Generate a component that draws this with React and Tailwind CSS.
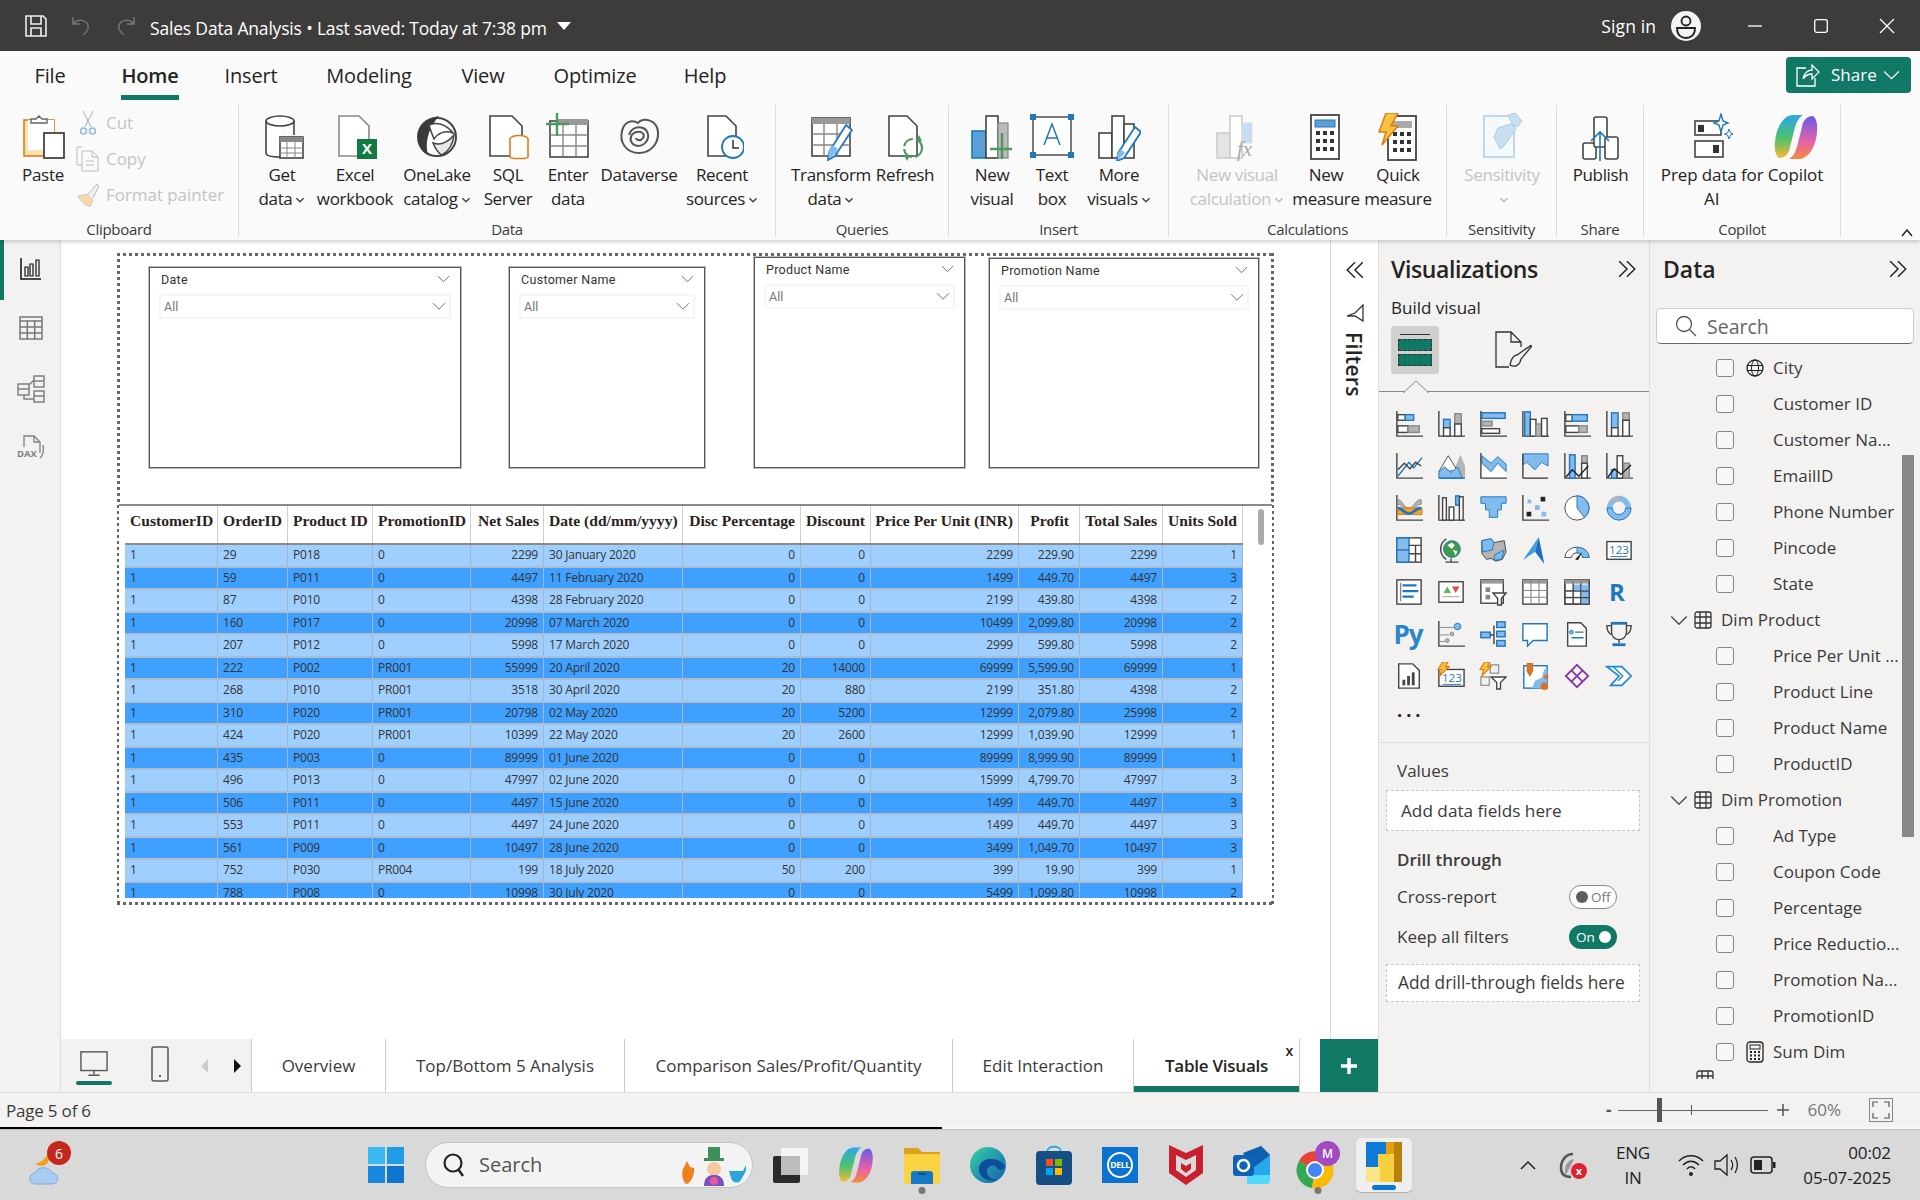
import React from 'react';

const D = '#444', B = '#1f77bd', L = '#82bbee', G = '#b4b4b4', W = '#fff', O = '#e07b10';
const S = ({ w = 28, h = 28, vb, children, className = '' }) => (
  <svg width={w} height={h} viewBox={vb || `0 0 ${w} ${h}`} fill="none" className={'shrink-0 ' + className}>{children}</svg>
);
const R = ({ x, y, w, h, f = 'none', s = D, sw = 1.5, r = 0 }) => <rect x={x} y={y} width={w} height={h} fill={f} stroke={s} strokeWidth={sw} rx={r} />;
const P = ({ d, f = 'none', s = D, sw = 1.5 }) => <path d={d} fill={f} stroke={s} strokeWidth={sw} />;
const Ax = () => <P d="M1 0v27h28" />;
const Bolt = ({ x = 0, y = 0 }) => <path transform={`translate(${x} ${y})`} d="M6 0h6L9 5h4L3 15l2-7H1z" fill="#f6c343" stroke={O} strokeWidth="1.2" />;
const Card123 = () => (<><R x="1" y="5" w="26" h="19" f={W} /><text x="14" y="18" textAnchor="middle" fontSize="12.5" fill={B} fontFamily="Open Sans">123</text><P d="M5 21h18" s={B} sw="1" /></>);
const TableI = ({ x = 1, y = 1, w = 26, h = 26 }) => (<>
  <R x={x} y={y} w={w} h={h} f={W} /><rect x={x} y={y} width={w} height="4" fill="#999" />
  <P d={`M${x + w / 3} ${y}v${h}M${x + 2 * w / 3} ${y}v${h}M${x} ${y + 4 + (h - 4) / 3}h${w}M${x} ${y + 4 + 2 * (h - 4) / 3}h${w}`} s="#888" sw="1.2" />
</>);

const vizIcons = [
  <><Ax /><R x="2" y="4" w="8" h="6" f={W} /><R x="10" y="4" w="9" h="6" f={L} s={B} /><R x="2" y="16" w="11" h="7" f={W} /><R x="13" y="16" w="12" h="7" f={G} s="#888" /></>,
  <><Ax /><R x="6" y="9" w="7" h="9" f={L} s={B} /><R x="6" y="18" w="7" h="9" f={W} /><R x="18" y="3" w="7" h="11" f={G} s="#888" /><R x="18" y="14" w="7" h="13" f={W} /></>,
  <><Ax /><R x="2" y="2" w="25" h="6" f={L} s={B} /><R x="2" y="11" w="11" h="5" f={G} s="#888" /><R x="2" y="19" w="19" h="5" f={W} /></>,
  <><Ax /><R x="3" y="1" w="6" h="26" f={L} s={B} /><R x="9" y="9" w="6" h="18" f={W} /><R x="15" y="14" w="6" h="13" f={G} s="#888" /><R x="21" y="8" w="6" h="19" f={W} /></>,
  <><Ax /><R x="2" y="4" w="7" h="7" f={W} /><R x="9" y="4" w="16" h="7" f={L} s={B} /><R x="2" y="16" w="14" h="7" f={W} /><R x="16" y="16" w="9" h="7" f={G} s="#888" /></>,
  <><Ax /><R x="6" y="2" w="7" h="16" f={L} s={B} /><R x="6" y="18" w="7" h="9" f={W} /><R x="18" y="2" w="7" h="8" f={G} s="#888" /><R x="18" y="10" w="7" h="17" f={W} /></>,
  <><Ax /><P d="M2 25L14 10l5 6 9-11" s={B} /><P d="M2 18l7-7 6 6 6-7 6 4" /></>,
  <><path d="M14 27L24 2l5 12v13z" fill={G} /><path d="M1 20L11 3l10 16z" fill={W} stroke={D} /><path d="M1 27v-7l6-5 7 6 7-6 5 12z" fill={L} stroke={B} /><P d="M1 27h28" s={B} /></>,
  <><path d="M2 11l10 9 7-9 9 9v7H2z" fill={W} /><path d="M2 3l10 8 7-7 9 8v8l-9-9-7 9-10-9z" fill={L} stroke={B} /><Ax /></>,
  <><path d="M1 1h27v13l-7-4-7 8-9-8-4 3z" fill={L} stroke={B} /><path d="M1 27h27" stroke={D} strokeWidth="1.5" /><P d="M1 1v26" /></>,
  <><Ax /><R x="6" y="2" w="6" h="25" f={L} s={B} /><R x="19" y="3" w="6" h="8" f={G} s="#888" /><R x="19" y="11" w="6" h="16" f={W} /><P d="M2 26l7-8 7 7 10-11" s="#222" /></>,
  <><Ax /><R x="6" y="18" w="6" h="9" f={L} s={B} /><R x="12" y="3" w="6" h="24" f={W} /><R x="19" y="11" w="6" h="16" f={G} s="#888" /><P d="M2 26l7-9 7 6 11-10" s="#222" /></>,
  <><Ax /><path d="M2 5c5 0 6 9 12 9s6-9 13-9v5c-7 0-7 9-13 9S8 10 2 10z" fill={G} stroke="#888" /><path d="M2 14h26v7H2z" fill="#f0a030" stroke={O} /><path d="M2 14c5 0 6 6 12 6s6-6 13-6" stroke={B} strokeWidth="3" /></>,
  <><Ax /><R x="5" y="3" w="4" h="24" f={W} /><R x="12" y="13" w="5" h="14" f={W} /><R x="19" y="1" w="4" h="10" f={L} s={B} /><R x="23" y="2" w="4" h="25" f={W} /></>,
  <><path d="M1 2h27v7h-5v7h-4v8h-9v-8H6V9H1z" fill={L} stroke={B} /></>,
  <><Ax /><rect x="6" y="5" width="4" height="4" fill={L} /><rect x="20" y="2" width="5" height="5" fill="#222" /><rect x="14" y="11" width="5" height="5" fill={L} /><rect x="5" y="18" width="5" height="5" fill="#222" /><rect x="21" y="18" width="5" height="5" fill={L} /></>,
  <><circle cx="14" cy="14" r="13" fill={W} stroke={D} /><path d="M14 1a13 13 0 0 1 8 23l-8-10z" fill={L} stroke={B} /></>,
  <><circle cx="14" cy="14" r="10" stroke={L} strokeWidth="6" /><path d="M1 14a13 13 0 0 0 26 0h-6a7 7 0 0 1-14 0z" fill={L} stroke={B} strokeWidth="1" /><path d="M5 5a13 13 0 0 1 9-4v6a7 7 0 0 0-5 2z" fill={G} /></>,
  <><R x="1" y="1" w="26" h="26" f={W} /><rect x="1" y="1" width="13" height="26" fill={L} stroke={B} strokeWidth="1.5" /><P d="M1 14h13" s={B} /><P d="M14 9h13M21 9v18M14 18h13" /></>,
  <><circle cx="15" cy="13" r="9" fill="#3a9c4a" stroke="#2f6fb0" /><path d="M10 9l5-3 3 3-3 4zM16 14l5 1-2 5z" fill={W} /><P d="M9 2a13 13 0 0 0 0 22M8 27h14M14 23v4" /></>,
  <><path d="M2 4l10-2 3 4 11-2 2 12-4 8-7 2-5-3-5 1-5-6z" fill={G} stroke={D} /><path d="M2 4l10-2 3 4-2 8-10 2z" fill={L} stroke={B} /><path d="M15 25l1-6 10-5-3 10z" fill={L} stroke={B} /></>,
  <><path d="M18 0l-4 16L1 25z" fill="#3f9fd8" /><path d="M18 0l6 29-10-13z" fill="#1f6fc0" /></>,
  <><path d="M1 22a13 11 0 0 1 26 0h-7a6 5 0 0 0-12 0z" fill={W} stroke={D} /><path d="M14 11a13 11 0 0 1 13 11h-7a6 5 0 0 0-6-5z" fill={L} stroke={B} /><path d="M12 24l8-8-5 9z" fill="#222" /></>,
  <Card123 />,
  <><R x="1" y="1" w="26" h="26" f={W} /><P d="M5 4v20" s="#888" /><P d="M7 7h15M7 13h17M7 19h12" s={B} sw="2.4" /></>,
  <><R x="1" y="3" w="26" h="22" f={W} /><path d="M6 15l4-7 4 7z" fill="#5cb85c" /><path d="M15 8h8l-4 7z" fill="#e5484d" /><P d="M5 19h18" s="#999" sw="1" /></>,
  <><R x="1" y="1" w="24" h="25" f={W} /><rect x="1" y="1" width="24" height="4" fill="#999" /><rect x="6" y="9" width="5" height="5" fill="#888" /><rect x="6" y="17" width="5" height="5" fill="#888" /><path d="M14 15h14l-5 6v7h-4v-7z" fill={W} stroke={D} strokeWidth="1.5" /></>,
  <TableI />,
  <><TableI /><rect x="10" y="6" width="17" height="7" fill={L} /><rect x="18" y="13" width="9" height="14" fill={L} /><P d="M1 5v22h26V1M10 5v22M18 5v22M1 13h26M1 20h26" s={D} sw="1.2" /></>,
  <span className="text-[24px] font-bold text-[#1f77bd] leading-none font-['Open_Sans'] -translate-x-[2px]">R</span>,
  <span className="text-[26px] font-bold text-[#2a86c8] leading-none font-['Open_Sans'] tracking-[-1px] -translate-x-[1px]">Py</span>,
  <><Ax /><P d="M1 7h17M1 15h11M1 22h7" s="#888" sw="1" /><circle cx="21" cy="6" r="3.5" fill={L} stroke={B} /><circle cx="15" cy="14" r="2" fill={G} stroke="#888" /><circle cx="10" cy="21" r="2" fill={G} stroke="#888" /></>,
  <><rect x="1" y="12" width="10" height="6" fill={L} stroke={B} strokeWidth="1.5" /><P d="M11 15h4M15 5v20" s={D} /><R x="18" y="1" w="9" h="6" f={L} s={B} /><R x="18" y="11" w="9" h="6" f={L} s={B} /><R x="18" y="21" w="9" h="6" f={L} s={B} /></>,
  <P d="M1 3h26v18H12l-6 6v-6H1z" f={W} s={B} />,
  <><P d="M4 2h14l6 6v19H4z" f={W} /><circle cx="8" cy="12" r="2" fill={L} stroke={B} /><P d="M12 12h9M8 18h13" s={B} sw="1.5" /></>,
  <><P d="M6 2h16v10a8 8 0 0 1-16 0zM6 5H1c0 6 2 9 6 10M22 5h5c0 6-2 9-6 10M14 20v4" /><rect x="6" y="1" width="16" height="3" fill={B} /><rect x="7" y="24" width="14" height="3" fill={B} /></>,
  <><P d="M3 1h15l7 7v19H3z" f={W} /><rect x="7" y="18" width="3" height="6" fill={D} /><rect x="12" y="14" width="3" height="10" fill={D} /><rect x="17" y="10" width="3" height="14" fill={D} /></>,
  <><R x="1" y="7" w="27" h="18" f={W} /><text x="15" y="20" textAnchor="middle" fontSize="12.5" fill={B} fontFamily="Open Sans">123</text><P d="M5 23h20" s={B} sw="1" /><Bolt x="-1" y="-1" /></>,
  <><R x="11" y="2" w="9" h="9" s="#999" /><R x="1" y="15" w="9" h="9" s="#999" /><path d="M12 15h16l-6 6v7h-4v-7z" fill={W} stroke={D} strokeWidth="1.5" /><Bolt x="-1" y="-1" /></>,
  <><R x="2" y="3" w="25" h="24" f={W} s={B} /><path d="M11 27l3-8 7-3 3-9 3-1v21z" fill={L} /><path d="M5 0h7v9l-3.500 6L5 9z" fill="#d9732a" /><circle cx="26" cy="15" r="2.500" fill="#d9732a" /><circle cx="24" cy="25" r="4" fill="#d9732a" /></>,
  <><P d="M14 2l12 12-12 12L2 14z" s="#8a3aa6" sw="2" /><P d="M8 8l12 12M20 8L8 20" s="#8a3aa6" sw="2" /></>,
  <><P d="M1 4h16l10 10-10 10H5l9-10z" f={W} s="#1c86d8" sw="1.8" /><P d="M8 4l10 10-5 5" s="#1c86d8" sw="1.4" /></>,
];

const Chev = ({ c = '#444', w = 10 }) => <svg width={w} height={w * 0.6} viewBox="0 0 8 5" className="inline-block ml-[3px] align-middle"><path d="M1 1l3 3 3-3" stroke={c} strokeWidth="1.2" fill="none" /></svg>;
const ChevB = ({ w = 14, c = '#555', className = '' }) => <svg width={w} height={w * 0.6} viewBox="0 0 14 8" className={className}><path d="M1 1l6 6 6-6" stroke={c} strokeWidth="1" fill="none" /></svg>;

const Btn = ({ w, icon, l1, l2, chev, off }) => (
  <div className={`${w} flex flex-col items-center shrink-0`}>
    <div className="h-[48px] mt-[8px] flex items-center justify-center">{icon}</div>
    <div className={`mt-[2px] text-center text-[17px] leading-[24px] whitespace-nowrap tracking-[-0.35px] ${off ? 'text-[#c4c4c4]' : 'text-[#252423]'}`}>
      <div>{l1}</div>
      <div className="h-[24px]">{l2}{chev && <Chev c={off ? '#bbb' : '#444'} />}</div>
    </div>
  </div>
);
const Group = ({ w, label, pl, children }) => (
  <div className={`${w} shrink-0 h-[132px] border-r border-[#dcdcdc] flex flex-col`}>
    <div className={`${pl} flex flex-1 min-h-0`}>{children}</div>
    <div className="text-center text-[15px] leading-[20px] mb-[-2px] tracking-[-0.3px] text-[#3b3a39]">{label}</div>
  </div>
);
const I = ({ children }) => <svg width="44" height="48" viewBox="0 0 44 48" fill="none">{children}</svg>;
const Doc = ({ x = 8, w = 22, h = 42, s = D }) => <path d={`M${x} 3h${w - 10}l10 10v${h - 10}h-${w}z M${x + w - 10} 3v10h10`} stroke={s} strokeWidth="1.6" fill={W} />;

const Icons = {
  paste: <I><rect x="3" y="7" width="30" height="36" fill="#fde2b0" stroke="#d9801a" strokeWidth="1.6" /><rect x="7" y="7" width="26" height="30" fill={W} /><path d="M10 10V6h5l3-3 3 3h5v4z" fill={W} stroke="#666" strokeWidth="1.4" /><rect x="23" y="20" width="20" height="25" fill={W} stroke={D} strokeWidth="1.8" /></I>,
  getData: <I><path d="M6 8v32c0 3 6 5 15 5V8" fill={W} /><ellipse cx="20" cy="8" rx="14" ry="5" fill={W} stroke={D} strokeWidth="1.6" /><path d="M6 8v32c0 3 6 4 14 4M34 8v14" stroke={D} strokeWidth="1.6" /><rect x="20" y="24" width="23" height="21" fill={W} stroke={D} strokeWidth="1.6" /><rect x="20" y="24" width="23" height="5" fill="#888" /><path d="M27 29v16M35 29v16M20 35h23M20 40h23" stroke="#888" /></I>,
  excel: <I><Doc x="6" w="30" h="40" s="#888" /><rect x="24" y="26" width="20" height="20" fill="#107c41" /><text x="34" y="41" fontSize="15" fontWeight="700" textAnchor="middle" fill={W} fontFamily="Open Sans">X</text></I>,
  onelake: <I><circle cx="22" cy="24" r="19" fill={W} stroke="#444" strokeWidth="2" /><path d="M24 3C13 5 3 12 3 25c0 8 4 14 10 17-3-11-1-25 11-39z" fill="#3a3a3a" /><path d="M14 12c8-4 18 0 24 8-8-3-15 0-19 6-2-5-4-10-5-14z" fill="#fff" stroke="#444" strokeWidth="1.500" /><path d="M18 30c8 3 15-1 21-8-1 9-5 16-12 20-4-2-7-7-9-12z" fill="#e8e8e8" stroke="#444" strokeWidth="1.500" /></I>,
  sql: <I><Doc x="4" w="32" h="40" /><ellipse cx="33" cy="26" rx="9" ry="3.500" fill={W} stroke={O} strokeWidth="1.6" /><path d="M24 26v18c0 2 18 2 18 0V26" fill={W} stroke={O} strokeWidth="1.6" /></I>,
  enter: <I><rect x="4" y="8" width="38" height="36" fill={W} stroke={D} strokeWidth="1.6" /><rect x="10" y="6" width="32" height="6" fill="#999" /><path d="M17 12v32M30 12v32M4 22h38M4 33h38" stroke="#888" strokeWidth="1.4" /><path d="M11 0v23M0 11h23" stroke="#4a9a5e" strokeWidth="2.4" /></I>,
  dataverse: <I><path d="M5 18c2-9 10-12 16-8 4-6 19-4 20 9 1 13-9 21-19 21C10 40 2 30 5 18z" stroke="#555" strokeWidth="2" /><path d="M12 22c2-7 9-9 14-7s7 9 3 14-11 5-14 1-1-10 5-11 8 3 6 6-6 3-7 0" stroke="#555" strokeWidth="2" /></I>,
  recent: <I><Doc x="8" w="28" h="40" /><circle cx="33" cy="34" r="11" fill={W} stroke={B} strokeWidth="1.8" /><path d="M33 27v8h6" stroke="#333" strokeWidth="1.5" /></I>,
  transform: <I><rect x="3" y="5" width="38" height="38" fill={W} stroke={D} strokeWidth="1.6" /><rect x="3" y="5" width="38" height="6" fill="#999" /><path d="M15 11v32M28 11v32M3 21h38M3 32h38" stroke="#888" strokeWidth="1.4" /><path d="M37 12l6 5-17 26-7 4 1-8z" fill={W} stroke={B} strokeWidth="1.8" /><path d="M24 32l6 5-10 9-1-7z" fill={L} /></I>,
  refresh: <I><Doc x="6" w="28" h="40" /><circle cx="30" cy="35" r="9" stroke="#4a9a5e" strokeWidth="2.2" strokeDasharray="12 3" /><path d="M36 22l3 6-6 0zM24 48l-3-6h6z" fill="#4a9a5e" /></I>,
  newVisual: <I><rect x="2" y="18" width="14" height="27" fill="#5a9fd8" stroke={B} strokeWidth="1.6" /><rect x="16" y="3" width="12" height="42" fill={W} stroke={D} strokeWidth="1.6" /><rect x="28" y="10" width="10" height="35" fill="#bbb" stroke="#888" strokeWidth="1.2" /><path d="M32 20v26M20 36h22" stroke="#4a9a5e" strokeWidth="2.4" /></I>,
  textBox: <I><rect x="3" y="4" width="38" height="38" fill={W} stroke={D} strokeWidth="1.4" /><rect x="0" y="1" width="6" height="6" fill={B} /><rect x="38" y="1" width="6" height="6" fill={B} /><rect x="0" y="39" width="6" height="6" fill={B} /><rect x="38" y="39" width="6" height="6" fill={B} /><path d="M14 32l8-21 8 21M17 25h10" stroke={B} strokeWidth="1.5" fill="none" /></I>,
  more: <I><rect x="2" y="20" width="13" height="25" fill={W} stroke={D} strokeWidth="1.6" /><rect x="15" y="3" width="12" height="42" fill={W} stroke={D} strokeWidth="1.6" /><rect x="27" y="11" width="10" height="34" fill={W} stroke={D} strokeWidth="1.6" /><path d="M38 14l6 5-17 26-7 3 1-8z" fill={W} stroke={B} strokeWidth="1.8" /><path d="M24 36l4 4-7 7-1-6z" fill={L} /></I>,
  calc: <I><rect x="2" y="20" width="13" height="25" fill="#e4e4e4" stroke="#ccc" strokeWidth="1.6" /><rect x="15" y="3" width="12" height="42" fill={W} stroke="#ccc" strokeWidth="1.6" /><rect x="27" y="10" width="10" height="20" fill="#c5dcf2" stroke="#ddd" /><text x="22" y="43" fontFamily="Liberation Serif" fontStyle="italic" fontSize="21" fill="#aaa">fx</text></I>,
  measure: <I><rect x="7" y="2" width="28" height="44" fill={W} stroke={D} strokeWidth="1.8" /><rect x="11" y="7" width="20" height="7" fill="#5a9fd8" stroke={B} /><path d="M12 20h4M19 20h4M26 20h4M12 28h4M19 28h4M26 28h4M12 36h4M19 36h4M26 36h4" stroke="#333" strokeWidth="4" /></I>,
  quick: <I><rect x="12" y="3" width="28" height="44" fill={W} stroke={D} strokeWidth="1.8" /><rect x="16" y="8" width="20" height="7" fill="#aaa" /><path d="M17 21h4M24 21h4M31 21h4M17 29h4M24 29h4M31 29h4M17 37h4M24 37h4M31 37h4" stroke="#333" strokeWidth="4" /><path d="M10 0h12l-7 13h7L6 32l4-13H3z" fill="#f6c343" stroke={O} strokeWidth="1.5" /></I>,
  sens: <I><rect x="4" y="3" width="30" height="41" fill="#f4f9fd" stroke="#b8d6ee" strokeWidth="1.8" /><path d="M28 2l7-2 7 8-5 6-5-3zM18 15l13-4 5 5-12 17-4 3-6-12z" fill="#c9e0f3" stroke="#a8cbe8" /></I>,
  publish: <I><rect x="4" y="30" width="13" height="16" rx="2" fill={W} stroke={D} strokeWidth="1.6" /><rect x="15" y="4" width="13" height="30" rx="2" fill={W} stroke={D} strokeWidth="1.6" /><rect x="26" y="24" width="13" height="22" rx="2" fill={W} stroke={D} strokeWidth="1.6" /><path d="M21 48V19M12 28l9-9 9 9" stroke={B} strokeWidth="1.6" fill="none" /></I>,
  prep: <I><rect x="6" y="8" width="26" height="14" fill={W} stroke={D} strokeWidth="1.6" /><rect x="9" y="12" width="6" height="7" fill="#333" /><rect x="6" y="28" width="28" height="16" fill={W} stroke={D} strokeWidth="1.6" /><rect x="24" y="32" width="6" height="8" fill="#333" /><path d="M32 1l2 7 5 2-5 2-2 7-2-7-5-2 5-2z" fill={W} stroke={B} strokeWidth="1.4" /><path d="M40 16l1.500 4 3 1-3 1-1.500 4-1.500-4-3-1 3-1z" fill={W} stroke={B} /></I>,
};
const Copilot = ({ id, w = 44, h = 48 }) => (
  <svg width={w} height={h} viewBox="0 0 44 48" fill="none">
    <defs>
      <linearGradient id={id + 'a'} x1="0" y1="0" x2="0" y2="1"><stop offset="0" stopColor="#2aa7e8" /><stop offset=".55" stopColor="#4fc26b" /><stop offset="1" stopColor="#f7b733" /></linearGradient>
      <linearGradient id={id + 'b'} x1="0" y1="0" x2="0" y2="1"><stop offset="0" stopColor="#6a5be8" /><stop offset=".6" stopColor="#e661a8" /><stop offset="1" stopColor="#f78a3c" /></linearGradient>
    </defs>
    <path d="M18 2h11c-5 3-7 8-9 16l-4 16c-1 7-5 11-11 11 -3-2-5-8-4-16C2 15 9 3 18 2z" fill={`url(#${id}a)`} />
    <path d="M26 46H15c5-3 7-8 9-16l4-16c1-7 5-11 11-11 3 2 5 8 4 16-1 14-8 26-17 27z" fill={`url(#${id}b)`} />
  </svg>
);

const Small = ({ icon, label }) => (
  <div className="h-[36px] flex items-center"><div className="w-[28px] flex justify-center">{icon}</div><span className="ml-[4px] text-[17px] text-[#c4c4c4] tracking-[-0.05px] whitespace-nowrap">{label}</span></div>
);

function TitleBar() {
  return (
    <div className="h-[51px] bg-[#3d3c3a] flex items-center text-white shrink-0">
      <div className="w-[150px] flex items-center shrink-0">
        <svg width="24" height="24" viewBox="0 0 24 24" fill="none" className="ml-[24px]"><path d="M2 2h17l3 3v17H2zM7 2v8h10V2M7 22v-8h10v8" stroke="#eee" strokeWidth="1.600" /></svg>
        <svg width="22" height="22" viewBox="0 0 22 22" fill="none" className="ml-[23px]"><path d="M2 2v7h7M2 9c4-5 13-5 15 1 1 4-2 8-5 10" stroke="#777" strokeWidth="1.500" /></svg>
        <svg width="22" height="22" viewBox="0 0 22 22" fill="none" className="ml-[21px]"><path d="M20 2v7h-7M20 9c-4-5-13-5-15 1-1 4 2 8 5 10" stroke="#777" strokeWidth="1.500" /></svg>
      </div>
      <span className="text-[17.5px] tracking-[-0.18px] whitespace-nowrap mt-[6px]">Sales Data Analysis • Last saved: Today at 7:38 pm</span>
      <svg width="14" height="8" viewBox="0 0 14 8" className="ml-[10px]"><path d="M0 0h14L7 8z" fill="#fff" /></svg>
      <div className="ml-auto flex items-center">
        <span className="text-[17.5px] tracking-[0.1px] mt-[1px]">Sign in</span>
        <svg width="30" height="30" viewBox="0 0 30 30" className="ml-[15px]"><circle cx="15" cy="15" r="15" fill="#f4f4f4" /><circle cx="15" cy="10" r="4.500" fill="none" stroke="#222" strokeWidth="1.800" /><path d="M6 17h18c0 7-4 10-9 10s-9-3-9-10z" fill="none" stroke="#222" strokeWidth="1.800" /></svg>
        <svg width="14" height="14" viewBox="0 0 14 14" className="ml-[47px]"><path d="M0 7h14" stroke="#fff" strokeWidth="1.300" /></svg>
        <svg width="14" height="14" viewBox="0 0 14 14" className="ml-[52px]"><rect x=".700" y=".700" width="12.600" height="12.600" rx="2" fill="none" stroke="#fff" strokeWidth="1.300" /></svg>
        <svg width="16" height="16" viewBox="0 0 16 16" className="ml-[51px] mr-[25px]"><path d="M1 1l14 14M15 1L1 15" stroke="#fff" strokeWidth="1.300" /></svg>
      </div>
    </div>
  );
}

function Ribbon() {
  const tabs = [['File', 'w-[100px]'], ['Home', 'w-[100px]'], ['Insert', 'w-[102px]'], ['Modeling', 'w-[134px]'], ['View', 'w-[94px]'], ['Optimize', 'w-[130px]'], ['Help', 'w-[90px]']];
  return (
    <div className="h-[189px] bg-[#fafafa] shrink-0 relative z-10 shadow-[0_2px_4px_rgba(0,0,0,0.18)]">
      <div className="h-[54px] flex items-start relative">
        {tabs.map(([t, w]) => (
          <div key={t} className={`${w} h-[47px] flex items-center justify-center relative text-[20px] tracking-[-0.15px] text-[#252423] ${t === 'Home' ? 'font-semibold' : ''}`}>
            <span className="relative mt-[3px]">{t}{t === 'Home' && <span className="absolute left-0 right-0 -bottom-[9px] h-[5px] bg-[#117865]" />}</span>
          </div>
        ))}
        <div className="absolute left-[1786px] top-[6px] w-[125px] h-[36px] rounded-[4px] bg-[#117865] flex items-center text-white">
          <svg width="26" height="26" viewBox="0 0 26 26" fill="none" className="ml-[8px]"><path d="M12 6H3v18h18v-8M9 17c1-6 5-9 9-9V3l7 7-7 7v-5c-4 0-7 2-9 5z" stroke="#fff" strokeWidth="1.300" /></svg>
          <span className="ml-[11px] text-[17px] tracking-[0px]">Share</span>
          <ChevB w={17} c="#fff" className="ml-[6px]" />
        </div>
      </div>
      <div className="flex h-[135px] items-start">
        <div className="w-[239px] shrink-0 h-[132px] border-r border-[#dcdcdc] flex flex-col">
          <div className="flex flex-1 min-h-0 pl-[20px]">
            <div className="w-[46px] flex flex-col items-center">
              <div className="h-[48px] mt-[8px] flex items-center">{Icons.paste}</div>
              <div className="mt-[2px] text-[17px] leading-[24px] tracking-[-0.3px] text-[#252423]">Paste</div>
            </div>
            <div className="ml-[8px] flex flex-col">
              <Small label="Cut" icon={<svg width="18" height="26" viewBox="0 0 18 26" fill="none"><path d="M4 1l8 16M14 1L6 17" stroke="#aaa" /><circle cx="4.500" cy="21" r="3" stroke="#8fbbdc" strokeWidth="1.500" /><circle cx="13.500" cy="21" r="3" stroke="#8fbbdc" strokeWidth="1.500" /></svg>} />
              <Small label="Copy" icon={<svg width="24" height="26" viewBox="0 0 24 26" fill="none"><path d="M6 1H1v18h5" stroke="#bbb" /><path d="M6 5h10l6 6v14H6zM16 5v6h6M10 15h8M10 19h8" stroke="#bbb" /></svg>} />
              <Small label="Format painter" icon={<svg width="24" height="24" viewBox="0 0 24 24" fill="none"><path d="M2 13l9-2 6 6-3 7c-4-1-10-6-12-11z" fill="#f8d9ac" stroke="#ccc" /><path d="M12 11l9-10 2 2-6 12" fill="#eee" stroke="#bbb" /></svg>} />
            </div>
          </div>
          <div className="text-center text-[15px] leading-[20px] mb-[-2px] tracking-[-0.3px] text-[#3b3a39]">Clipboard</div>
        </div>
        <Group w="w-[537px]" label="Data" pl="pl-[13px]">
          <Btn w="w-[60px]" icon={Icons.getData} l1="Get" l2="data" chev />
          <Btn w="w-[86px]" icon={Icons.excel} l1="Excel" l2="workbook" />
          <Btn w="w-[78px]" icon={Icons.onelake} l1="OneLake" l2="catalog" chev />
          <Btn w="w-[64px]" icon={Icons.sql} l1="SQL" l2="Server" />
          <Btn w="w-[56px]" icon={Icons.enter} l1="Enter" l2="data" />
          <Btn w="w-[86px]" icon={Icons.dataverse} l1="Dataverse" l2="" />
          <Btn w="w-[80px]" icon={Icons.recent} l1="Recent" l2="sources" chev />
        </Group>
        <Group w="w-[173px]" label="Queries" pl="pl-[9px]">
          <Btn w="w-[92px]" icon={Icons.transform} l1="Transform" l2="data" chev />
          <Btn w="w-[56px]" icon={Icons.refresh} l1="Refresh" l2="" />
        </Group>
        <Group w="w-[220px]" label="Insert" pl="pl-[13px]">
          <Btn w="w-[60px]" icon={Icons.newVisual} l1="New" l2="visual" />
          <Btn w="w-[60px]" icon={Icons.textBox} l1="Text" l2="box" />
          <Btn w="w-[74px]" icon={Icons.more} l1="More" l2="visuals" chev />
        </Group>
        <Group w="w-[278px]" label="Calculations" pl="pl-[15px]">
          <Btn w="w-[106px]" icon={Icons.calc} l1="New visual" l2="calculation" chev off />
          <Btn w="w-[72px]" icon={Icons.measure} l1="New" l2="measure" />
          <Btn w="w-[72px]" icon={Icons.quick} l1="Quick" l2="measure" />
        </Group>
        <Group w="w-[110px]" label="Sensitivity" pl="">
          <Btn w="w-[110px]" icon={Icons.sens} l1="Sensitivity" l2="" chev off />
        </Group>
        <Group w="w-[87px]" label="Share" pl="">
          <Btn w="w-[87px]" icon={Icons.publish} l1="Publish" l2="" />
        </Group>
        <Group w="w-[197px]" label="Copilot" pl="">
          <div className="w-[197px] flex flex-col">
            <div className="h-[48px] mt-[8px] flex items-center pl-[45px] gap-[41px]">{Icons.prep}<Copilot id="c1" /></div>
            <div className="mt-[2px] text-[17px] leading-[24px] tracking-[-0.12px] text-[#252423] text-center whitespace-nowrap">Prep data for Copilot</div>
            <div className="text-[17px] leading-[24px] text-[#252423] pl-[60px]">AI</div>
          </div>
        </Group>
        <div className="ml-auto mr-[7px] mt-[124px]"><svg width="12" height="8" viewBox="0 0 12 8"><path d="M1 7l5-6 5 6" stroke="#222" strokeWidth="1.500" fill="none" /></svg></div>
      </div>
    </div>
  );
}

function LeftNav() {
  return (
    <div className="w-[61px] shrink-0 bg-[#f3f2f1] border-r border-[#dedede] flex flex-col items-center relative pl-[2px]">
      <div className="absolute left-0 top-0 w-[4px] h-[60px] bg-[#117865]" />
      <svg width="22" height="22" viewBox="0 0 22 22" fill="none" className="mt-[18px]"><path d="M1 0v21h20" stroke="#111" strokeWidth="1.500" /><path d="M5 9h3v9H5zM10 6h3v12h-3zM16 2h3v16h-3z" stroke="#111" strokeWidth="1.200" /></svg>
      <svg width="24" height="24" viewBox="0 0 24 24" fill="none" className="mt-[36px]"><rect x="1" y="1" width="22" height="22" stroke="#777" strokeWidth="1.500" /><path d="M1 5h22M1 11h22M1 17h22M8.300 5v18M15.700 5v18" stroke="#777" strokeWidth="1.500" /></svg>
      <svg width="28" height="28" viewBox="0 0 28 28" fill="none" className="mt-[35px]"><path d="M1 9h11v11H1zM1 14h11M17 1h10v11H17zM17 6h10M17 16h10v11H17zM17 21h10M12 10l5-5M7 20v4h10" stroke="#808080" strokeWidth="1.500" /></svg>
      <div className="mt-[32px] relative w-[28px] h-[26px]">
        <svg width="28" height="26" viewBox="0 0 28 26" fill="none"><path d="M7 12V1h10l6 6v11M17 1v6h6M26 10c1 6 0 10-3 13" stroke="#808080" strokeWidth="1.300" /></svg>
        <span className="absolute left-[0px] top-[13px] text-[9.500px] leading-[12px] font-bold text-[#808080]">DAX</span>
      </div>
    </div>
  );
}

function Slicer({ box, title }) {
  return (
    <div className={`${box} absolute border border-[#555] shadow-[0_0_0_1px_#bbb] bg-white px-[9px] flex flex-col`}>
      <div className="h-[24px] flex items-center justify-between pl-[2px] pr-[1px] text-[12.500px] text-[#333] font-['Roboto'] tracking-[0.3px] shrink-0">
        <span className="mt-[1px]">{title}</span><ChevB w={13} c="#666" className="mb-[3px]" />
      </div>
      <div className="h-[25px] mt-[2px] border-2 border-[#f6f6f6] flex items-center justify-between pl-[3px] pr-[3px] text-[12.500px] text-[#777] font-['Roboto']">
        <span className="mt-[1px]">All</span><ChevB w={14} c="#777" />
      </div>
    </div>
  );
}

const rows = [
  '1,29,P018,0,2299,30 January 2020,0,0,2299,229.90,2299,1',
  '1,59,P011,0,4497,11 February 2020,0,0,1499,449.70,4497,3',
  '1,87,P010,0,4398,28 February 2020,0,0,2199,439.80,4398,2',
  '1,160,P017,0,20998,07 March 2020,0,0,10499,2|099.80,20998,2',
  '1,207,P012,0,5998,17 March 2020,0,0,2999,599.80,5998,2',
  '1,222,P002,PR001,55999,20 April 2020,20,14000,69999,5|599.90,69999,1',
  '1,268,P010,PR001,3518,30 April 2020,20,880,2199,351.80,4398,2',
  '1,310,P020,PR001,20798,02 May 2020,20,5200,12999,2|079.80,25998,2',
  '1,424,P020,PR001,10399,22 May 2020,20,2600,12999,1|039.90,12999,1',
  '1,435,P003,0,89999,01 June 2020,0,0,89999,8|999.90,89999,1',
  '1,496,P013,0,47997,02 June 2020,0,0,15999,4|799.70,47997,3',
  '1,506,P011,0,4497,15 June 2020,0,0,1499,449.70,4497,3',
  '1,553,P011,0,4497,24 June 2020,0,0,1499,449.70,4497,3',
  '1,561,P009,0,10497,28 June 2020,0,0,3499,1|049.70,10497,3',
  '1,752,P030,PR004,199,18 July 2020,50,200,399,19.90,399,1',
  '1,788,P008,0,10998,30 July 2020,0,0,5499,1|099.80,10998,2',
].map(r => r.split(',').map(c => c.replace('|', ',')));
const headers = ['CustomerID', 'OrderID', 'Product ID', 'PromotionID', 'Net Sales', 'Date (dd/mm/yyyy)', 'Disc Percentage', 'Discount', 'Price Per Unit (INR)', 'Profit', 'Total Sales', 'Units Sold'];
const cols = 'grid grid-cols-[93px_70px_85px_98px_73px_139px_118px_70px_148px_61px_83px_80px]';
const Dots = ({ c }) => <div className={`absolute ${c}`} />;

function Canvas() {
  return (
    <div className="flex-1 relative bg-white overflow-hidden">
      <div className="absolute left-[56px] top-[13px] w-[1157px] h-[652px]">
        <Dots c="left-0 right-0 top-0 h-[3px] bg-[repeating-linear-gradient(90deg,#666_0_3px,transparent_3px_6px)]" />
        <Dots c="left-0 right-0 bottom-0 h-[3px] bg-[repeating-linear-gradient(90deg,#666_0_3px,transparent_3px_6px)]" />
        <Dots c="left-0 top-0 bottom-0 w-[3px] bg-[repeating-linear-gradient(180deg,#666_0_3px,transparent_3px_6px)]" />
        <Dots c="right-0 top-0 bottom-0 w-[3px] bg-[repeating-linear-gradient(180deg,#666_0_3px,transparent_3px_6px)]" />
      </div>
      <Slicer box="left-[88px] top-[27px] w-[312px] h-[201px]" title="Date" />
      <Slicer box="left-[448px] top-[27px] w-[196px] h-[201px]" title="Customer Name" />
      <Slicer box="left-[693px] top-[17px] w-[211px] h-[211px]" title="Product Name" />
      <Slicer box="left-[928px] top-[18px] w-[270px] h-[210px]" title="Promotion Name" />
      <div className="absolute left-[58px] top-[264px] w-[1153px] h-[394px] border-t-2 border-[#8a8a8a] overflow-hidden bg-white">
        <div className="absolute right-[8px] top-[3px] w-[6px] h-[36px] rounded-[3px] bg-[#aaa]" />
        <div className="pl-[6px]">
          <div className={`${cols} h-[39px] w-[1118px] border-b-2 border-[#8a8a8a]`}>
            {headers.map((h, i) => (
              <div key={h} className={`pb-[8px] border-r border-[#d0d0d0] flex items-center whitespace-nowrap text-[15.600px] font-bold text-[#2b2220] font-['Liberation_Serif',serif] ${i === 9 ? 'justify-end pr-[10px]' : i >= 6 && i < 11 ? 'justify-end pr-[5px]' : i === 4 ? 'pl-[7px]' : 'pl-[5px]'}`}>{h}</div>
            ))}
          </div>
          {rows.map((r, ri) => (
            <div key={ri} className={`${cols} w-[1118px] h-[22.500px] border-b-2 border-[#aebccc] ${ri % 2 ? 'bg-[#3fa0ff]' : 'bg-[#9fcfff]'}`}>
              {r.map((c, i) => (
                <div key={i} className={`border-r border-[#a8b4c2] flex items-center text-[12px] tracking-[-0.2px] text-[#333] whitespace-nowrap px-[5px] ${i === 4 || i > 5 ? 'justify-end' : ''}`}>{c}</div>
              ))}
            </div>
          ))}
        </div>
      </div>
    </div>
  );
}

function Filters() {
  return (
    <div className="w-[48px] shrink-0 bg-white border-l border-[#d8d8d8] flex flex-col items-center">
      <svg width="20" height="18" viewBox="0 0 18 16" fill="none" className="mt-[21px]"><path d="M9 1L2 8l7 7M16 1L9 8l7 7" stroke="#222" strokeWidth="1.300" /></svg>
      <svg width="18" height="18" viewBox="0 0 18 18" fill="none" className="mt-[25px]"><path d="M17 1v16L9 12H1l8-3z" stroke="#333" strokeWidth="1.300" /></svg>
      <div className="mt-[10px] [writing-mode:vertical-rl] text-[21px] font-semibold text-[#252423] tracking-[0.3px] -ml-[2px]">Filters</div>
    </div>
  );
}

function Tabs() {
  const t = [['Overview', 'w-[134px]'], ['Top/Bottom 5 Analysis', 'w-[239px]'], ['Comparison Sales/Profit/Quantity', 'w-[328px]'], ['Edit Interaction', 'w-[181px]']];
  return (
    <div className="h-[53px] shrink-0 flex bg-white">
      <div className="w-[191px] bg-[#f3f2f1] flex items-center pl-[15px] relative border-r border-[#ccc]">
        <div className="relative w-[36px] h-[53px] flex justify-center">
          <svg width="28" height="30" viewBox="0 0 30 30" fill="none" className="mt-[10px]"><rect x="1" y="2" width="28" height="20" stroke="#555" strokeWidth="1.500" /><path d="M15 22v4M9 27h12" stroke="#555" strokeWidth="1.500" /></svg>
          <div className="absolute left-0 right-0 top-[42px] h-[4px] rounded-full bg-[#117865]" />
        </div>
        <svg width="18" height="36" viewBox="0 0 18 36" fill="none" className="ml-[39px] mb-[4px]"><rect x="1" y="1" width="16" height="34" rx="2" stroke="#555" strokeWidth="1.500" /><path d="M8 30h2" stroke="#333" strokeWidth="1.500" /></svg>
        <svg width="8" height="14" viewBox="0 0 8 14" className="ml-[32px]"><path d="M7 0v14L0 7z" fill="#ccc" /></svg>
        <svg width="8" height="14" viewBox="0 0 8 14" className="ml-[24px]"><path d="M1 0v14l7-7z" fill="#111" /></svg>
      </div>
      {t.map(([n, w]) => <div key={n} className={`${w} border-r border-[#ccc] flex items-center justify-center text-[17px] tracking-[0px] text-[#3b3a39] whitespace-nowrap`}>{n}</div>)}
      <div className="w-[166px] relative border-r border-[#ccc] flex items-center justify-center text-[17px] font-semibold tracking-[-0.25px] text-[#252423] whitespace-nowrap">
        Table Visuals
        <span className="absolute right-[6px] top-[3px] text-[14px] leading-[18px] text-[#222]">x</span>
        <div className="absolute left-0 right-0 bottom-0 h-[6px] bg-[#117865]" />
      </div>
      <div className="w-[20px]" />
      <div className="w-[58px] bg-[#117865] flex items-center justify-center"><svg width="18" height="18" viewBox="0 0 18 18"><path d="M9 1v16M1 9h16" stroke="#fff" strokeWidth="3.500" /></svg></div>
    </div>
  );
}

const Toggle = ({ on }) => on ? (
  <div className="w-[48px] h-[24px] rounded-full bg-[#117865] flex items-center justify-between pl-[7px] pr-[6px] text-[13.500px] text-white"><span>On</span><span className="w-[12px] h-[12px] rounded-full bg-white" /></div>
) : (
  <div className="w-[48px] h-[24px] rounded-full bg-white border border-[#8a8886] flex items-center pl-[6px] text-[13.500px] text-[#777]"><span className="w-[12px] h-[12px] rounded-full bg-[#605e5c] mr-[3px]" /><span>Off</span></div>
);

function Viz() {
  return (
    <div className="w-[271px] shrink-0 bg-[#f3f2f1] border-l border-[#dedede] flex flex-col">
      <div className="h-[58px] pl-[12px] pr-[12px] flex items-center justify-between shrink-0">
        <span className="text-[23px] font-semibold tracking-[-0.4px] text-[#252423]">Visualizations</span>
        <svg width="20" height="18" viewBox="0 0 18 16" fill="none"><path d="M2 1l7 7-7 7M9 1l7 7-7 7" stroke="#222" strokeWidth="1.300" /></svg>
      </div>
      <div className="pl-[12px] text-[17px] font-medium leading-[24px] text-[#252423] -mt-[2px]">Build visual</div>
      <div className="pl-[12px] mt-[6px] flex items-center relative h-[48px]">
        <div className="w-[48px] h-[48px] rounded-[3px] bg-[#d2d0ce] flex flex-col items-center justify-center">
          <div className="w-[30px] h-[1px] bg-[#333] mb-[4px]" />
          <div className="w-[34px] h-[12px] bg-[#117865] border border-dashed border-[#333] mb-[3px]" />
          <div className="w-[34px] h-[12px] bg-[#117865] border border-dashed border-[#333]" />
        </div>
        <svg width="38" height="38" viewBox="0 0 38 38" fill="none" className="ml-[56px]"><path d="M14 36H1V1h15l10 10v5M16 1v10h10" stroke="#333" strokeWidth="1.300" /><path d="M15 34c5 3 10 0 11-6l10-12c1-1 0-2-1-1L22 24c-4 0-6 5-7 10z" fill="#f3f2f1" stroke="#333" strokeWidth="1.300" /></svg>
      </div>
      <div className="relative h-[18px] border-b border-[#8a8886] shrink-0">
        <svg width="26" height="13" viewBox="0 0 26 13" className="absolute left-[24px] top-[6px]"><path d="M0 13L13 1l13 12" fill="#f3f2f1" stroke="#8a8886" /></svg>
      </div>
      <div className="grid grid-cols-[repeat(6,42px)] auto-rows-[42px] pl-[9px] pt-[11px] shrink-0">
        {vizIcons.map((ic, i) => (
          <div key={i} className="flex items-center justify-center">
            {ic.type === 'span' ? ic : <S vb="-1 -1 30 30">{ic}</S>}
          </div>
        ))}
      </div>
      <div className="pl-[18px] mt-[4px] text-[18px] leading-[18px] tracking-[4px] font-bold text-[#222]">...</div>
      <div className="mt-[23px] border-t border-[#e1dfdd] pt-[17px] flex flex-col">
        <div className="pl-[18px] text-[17px] leading-[22px] text-[#3b3a39]">Values</div>
        <div className="ml-[7px] w-[254px] h-[41px] mt-[8px] bg-white border border-dashed border-[#c8c6c4] flex items-center pl-[14px] text-[17.200px] text-[#3b3a39]">Add data fields here</div>
        <div className="pl-[18px] mt-[17px] text-[17px] font-semibold leading-[24px] text-[#3b3a39]">Drill through</div>
        <div className="pl-[18px] pr-[32px] mt-[13px] h-[24px] flex items-center justify-between text-[17px] text-[#3b3a39]"><span>Cross-report</span><Toggle /></div>
        <div className="pl-[18px] pr-[32px] mt-[16px] h-[24px] flex items-center justify-between text-[17px] text-[#3b3a39]"><span>Keep all filters</span><Toggle on /></div>
        <div className="ml-[7px] w-[254px] h-[38px] mt-[15px] bg-white border border-dashed border-[#c8c6c4] flex items-center pl-[11px] text-[17.300px] text-[#3b3a39] whitespace-nowrap overflow-hidden">Add drill-through fields here</div>
      </div>
    </div>
  );
}

const TblI = () => <svg width="18" height="18" viewBox="0 0 18 18" fill="none"><rect x="1" y="1" width="16" height="16" rx="2" stroke="#333" strokeWidth="1.300" /><path d="M1 6h16M1 12h16M6 1v16M12 1v16" stroke="#333" strokeWidth="1.300" /></svg>;
const Globe = () => <svg width="18" height="18" viewBox="0 0 18 18" fill="none"><circle cx="9" cy="9" r="8" stroke="#222" strokeWidth="1.300" /><ellipse cx="9" cy="9" rx="3.500" ry="8" stroke="#222" /><path d="M1 6.500h16M1 11.500h16" stroke="#222" /></svg>;
const Calc = () => <svg width="18" height="22" viewBox="0 0 18 22" fill="none"><rect x="1" y="1" width="16" height="20" rx="3" stroke="#222" strokeWidth="1.300" /><rect x="4" y="4" width="10" height="4" stroke="#222" /><path d="M4 11h2M8 11h2M12 11h2M4 14.500h2M8 14.500h2M12 14.500h2M4 18h2M8 18h2M12 18h2" stroke="#222" strokeWidth="1.800" /></svg>;
const Field = ({ children, icon }) => (
  <div className="h-[36px] flex items-center pl-[66px] shrink-0">
    <div className="w-[18px] h-[18px] border border-[#8a8886] rounded-[3px] bg-[#f8f8f8]" />
    <div className="w-[39px] flex justify-center pl-[2px]">{icon}</div>
    <span className="text-[17px] text-[#3b3a39] whitespace-nowrap">{children}</span>
  </div>
);
const Tbl = ({ children }) => (
  <div className="h-[36px] flex items-center pl-[20px] shrink-0">
    <ChevB w={18} c="#444" />
    <span className="ml-[6px]"><TblI /></span>
    <span className="ml-[9px] text-[17px] text-[#3b3a39] whitespace-nowrap">{children}</span>
  </div>
);

function Data() {
  return (
    <div className="flex-1 bg-[#f3f2f1] border-l border-[#dedede] flex flex-col min-w-0 relative">
      <div className="h-[58px] pl-[13px] pr-[12px] mb-[2px] flex items-center justify-between shrink-0">
        <span className="text-[23px] font-semibold text-[#252423]">Data</span>
        <svg width="20" height="18" viewBox="0 0 18 16" fill="none"><path d="M2 1l7 7-7 7M9 1l7 7-7 7" stroke="#222" strokeWidth="1.300" /></svg>
      </div>
      <div className="ml-[6px] mr-[6px] mt-[8px] h-[36px] rounded-[5px] bg-white border border-[#ccc] border-b-[#666] flex items-center pl-[18px] shrink-0">
        <svg width="22" height="22" viewBox="0 0 22 22" fill="none"><circle cx="9" cy="9" r="7.500" stroke="#555" strokeWidth="1.300" /><path d="M14.500 14.500L21 21" stroke="#555" strokeWidth="1.300" /></svg>
        <span className="ml-[10px] text-[19.500px] text-[#666] mt-[1px]">Search</span>
      </div>
      <div className="mt-[6px] h-[732px] overflow-hidden flex flex-col">
        <Field icon={<Globe />}>City</Field>
        <Field>Customer ID</Field>
        <Field>Customer Na...</Field>
        <Field>EmailID</Field>
        <Field>Phone Number</Field>
        <Field>Pincode</Field>
        <Field>State</Field>
        <Tbl>Dim Product</Tbl>
        <Field>Price Per Unit ...</Field>
        <Field>Product Line</Field>
        <Field>Product Name</Field>
        <Field>ProductID</Field>
        <Tbl>Dim Promotion</Tbl>
        <Field>Ad Type</Field>
        <Field>Coupon Code</Field>
        <Field>Percentage</Field>
        <Field>Price Reductio...</Field>
        <Field>Promotion Na...</Field>
        <Field>PromotionID</Field>
        <Field icon={<Calc />}>Sum Dim</Field>
        <div className="h-[9px] pl-[46px] overflow-hidden shrink-0"><TblI /></div>
      </div>
      <div className="absolute left-[252px] top-[215px] w-[12px] h-[382px] bg-[#8a8886]" />
    </div>
  );
}

function Status() {
  return (
    <>
      <div className="h-[35px] shrink-0 bg-[#f3f2f1] border-t border-[#e1dfdd] flex items-center text-[#3b3a39]">
        <span className="pl-[6px] text-[17px] tracking-[-0.2px] mt-[1px]">Page 5 of 6</span>
        <div className="ml-auto flex items-center">
          <span className="text-[17px] text-[#555] font-bold">-</span>
          <div className="ml-[6px] w-[150px] h-[1px] bg-[#666] relative">
            <div className="absolute left-[39px] -top-[12px] w-[5px] h-[24px] bg-[#555]" />
            <div className="absolute left-[73px] -top-[5px] w-[1px] h-[10px] bg-[#555]" />
          </div>
          <svg width="14" height="14" viewBox="0 0 14 14" className="ml-[8px]"><path d="M7 1v12M1 7h12" stroke="#555" strokeWidth="1.500" /></svg>
          <span className="ml-[18px] text-[17px] text-[#777]">60%</span>
          <svg width="24" height="24" viewBox="0 0 24 24" fill="none" className="ml-[28px] mr-[27px]"><rect x=".5" y=".5" width="23" height="23" stroke="#888" fill="#f3f2f1" /><path d="M4 9V4h5M15 4h5v5M20 15v5h-5M9 20H4v-5" stroke="#555" strokeWidth="1.200" /></svg>
        </div>
      </div>
      <div className="h-[2px] shrink-0 flex bg-[#f8f8f8]"><div className="w-[942px] bg-black" /></div>
    </>
  );
}

const Slot = ({ children, className = 'w-[66px]' }) => <div className={`${className} relative shrink-0 h-full flex items-center justify-center`}>{children}</div>;
const Dot = () => <span className="absolute left-1/2 -translate-x-1/2 bottom-[6px] w-[7px] h-[7px] rounded-full bg-[#777]" />;

function Taskbar() {
  return (
    <div className="h-[71px] shrink-0 bg-[#d9d9d9] flex items-center border-t border-[#bdbdbd]">
      <div className="w-[368px] shrink-0 h-full relative">
        <svg width="40" height="44" viewBox="0 0 40 44" className="absolute left-[27px] top-[18px]"><path d="M8 16C16 14 20 8 22 4c2 8-2 18-14 12z" fill="#f0a020" /><path d="M8 36c-7 0-7-10 0-11 2-7 15-7 17 0 7 0 8 10 1 11z" fill="#a9cdf0" stroke="#7fa9d9" /></svg>
        <div className="absolute left-[47px] top-[11px] w-[24px] h-[24px] rounded-full bg-[#c4281c] text-white text-[14px] flex items-center justify-center">6</div>
      </div>
      <svg width="36" height="36" viewBox="0 0 36 36" className="shrink-0"><rect width="17" height="17" fill="#3ab8f4" /><rect x="19" width="17" height="17" fill="#1f9be8" /><rect y="19" width="17" height="17" fill="#1788dd" /><rect x="19" y="19" width="17" height="17" fill="#0f74cf" /></svg>
      <div className="ml-[21px] w-[328px] h-[46px] rounded-full bg-[#f3f3f3] border border-[#c4c4c4] flex items-center pl-[16px] shrink-0 relative">
        <svg width="24" height="26" viewBox="0 0 24 26" fill="none"><circle cx="11" cy="11" r="8.500" stroke="#222" strokeWidth="2.200" /><path d="M16 17l5 7" stroke="#222" strokeWidth="2.400" /></svg>
        <span className="ml-[13px] text-[20px] text-[#555]">Search</span>
        <svg width="70" height="44" viewBox="0 0 70 44" className="absolute right-[3px] top-0"><path d="M4 26l4-8 3 6 4 1c1 8-4 16-8 16-3-3-5-9-3-15z" fill="#f07f1e" /><ellipse cx="35" cy="26" rx="7" ry="7" fill="#f4c9a0" /><rect x="29" y="4" width="12" height="13" fill="#3f8f5a" /><rect x="25" y="15" width="20" height="3" fill="#3f8f5a" /><path d="M25 43c0-9 5-11 10-11s10 2 10 11z" fill="#7a4fc4" /><circle cx="35" cy="38" r="4" fill="#e65a9a" /><path d="M50 28h14l3-6v6l-4 7c-2 6-9 6-11 0z" fill="#2aa6d8" /></svg>
      </div>
      <div className="w-[4px] shrink-0" />
      <Slot><svg width="36" height="36" viewBox="0 0 36 36"><rect x="9" y="1" width="27" height="27" rx="2" fill="#f5f5f5" /><rect x="1" y="9" width="27" height="27" rx="2" fill="#2a2a2a" /><rect x="9" y="9" width="19" height="19" fill="#bcbcbc" /></svg></Slot>
      <Slot><Copilot id="c2" w={36} h={38} /></Slot>
      <Slot>
        <svg width="38" height="40" viewBox="0 0 38 40"><path d="M1 3h14l4 4h18v4H1z" fill="#dba21d" /><rect x="1" y="9" width="36" height="30" rx="2" fill="#fbd23f" /><path d="M11 26h16c2 0 3 1 3 3v10H8V29c0-2 1-3 3-3z" fill="#1778c8" /><rect x="15" y="28" width="8" height="2" fill="#0d4f87" /></svg>
        <Dot />
      </Slot>
      <Slot><svg width="36" height="40" viewBox="0 0 36 40"><defs><linearGradient id="eg" x1="0" y1="0" x2="1" y2="1"><stop offset="0" stopColor="#37d2a2" /><stop offset="1" stopColor="#0f5fb0" /></linearGradient></defs><circle cx="18" cy="20" r="18" fill="url(#eg)" /><path d="M20 14c-7 0-12 5-11 12 1 7 10 11 18 9-6 0-11-4-10-10 1-5 8-6 10-2 2 3 7 2 8-1-1-5-8-8-15-8z" fill="#0c4c9c" /></svg></Slot>
      <Slot><svg width="36" height="40" viewBox="0 0 36 40" fill="none"><path d="M11 7c0-7 14-7 14 0" stroke="#35a8e0" strokeWidth="2" /><rect y="6" width="36" height="34" rx="4" fill="#164f85" /><rect x="10" y="14" width="7" height="7" fill="#f25022" /><rect x="19" y="14" width="7" height="7" fill="#7fba00" /><rect x="10" y="23" width="7" height="7" fill="#00a4ef" /><rect x="19" y="23" width="7" height="7" fill="#ffb900" /></svg></Slot>
      <Slot>
        <div className="w-[36px] h-[36px] bg-[#0a72d0] flex items-center justify-center"><div className="w-[26px] h-[26px] rounded-full border-2 border-white flex items-center justify-center text-white text-[8.500px] font-bold tracking-[-0.3px]">DELL</div></div>
      </Slot>
      <Slot><svg width="34" height="40" viewBox="0 0 34 40"><path d="M0 0l17 8 17-8v28L17 40 0 28z" fill="#c8202f" /><path d="M7 10l10 5 10-5v15l-10 7-10-7z" fill="#d9d9d9" /><path d="M12 18l5 3 5-3v6l-5 4-5-4z" fill="#c8202f" /></svg></Slot>
      <Slot><svg width="38" height="40" viewBox="0 0 38 40"><path d="M14 12L28 1l9 9v22H17z" fill="#28a8ea" /><path d="M10 8L28 1l9 9-18 14z" fill="#0f5fb0" /><path d="M14 30h23v6c0 2-2 3-3 3H14z" fill="#50d9ff" /><rect y="10" width="21" height="21" rx="3" fill="#0c63b8" /><circle cx="10.500" cy="20.500" r="5.500" fill="none" stroke="#fff" strokeWidth="2.500" /></svg></Slot>
      <Slot>
        <div className="relative w-[44px] h-[50px]">
          <svg width="38" height="38" viewBox="0 0 38 38" className="absolute left-0 top-[11px]"><path d="M19 19L3 10a18 18 0 0 1 32 0z" fill="#ea4335" /><path d="M19 19L3 10a18 18 0 0 0 13 27z" fill="#34a853" /><path d="M19 19l16-9a18 18 0 0 1-19 27z" fill="#fbbc05" /><circle cx="19" cy="19" r="9" fill="#fff" /><circle cx="19" cy="19" r="7" fill="#4285f4" /></svg>
          <div className="absolute right-0 top-[1px] w-[25px] h-[25px] rounded-full bg-[#a24ac2] text-white text-[12px] font-semibold flex items-center justify-center">M</div>
        </div>
        <Dot />
      </Slot>
      <Slot>
        <div className="w-[56px] h-[54px] rounded-[5px] bg-[#efefef] shadow-[0_1px_1px_rgba(0,0,0,0.2)] flex items-center justify-center relative">
          <svg width="36" height="40" viewBox="0 0 36 40" className="mb-[6px]"><rect width="36" height="40" fill="#0c7ad6" /><rect x="20" width="16" height="40" fill="#e0a010" /><rect x="28" width="8" height="40" fill="#b9800c" /><rect x="12" y="12" width="16" height="28" fill="#f6cf3f" /><rect y="25" width="14" height="15" fill="#fbe389" /></svg>
          <span className="absolute bottom-[2px] left-1/2 -translate-x-1/2 w-[24px] h-[5px] rounded-full bg-[#0a78d4]" />
        </div>
      </Slot>
      <div className="w-[94px] shrink-0" />
      <Slot className="w-[34px]"><svg width="16" height="10" viewBox="0 0 16 10"><path d="M1 9l7-7 7 7" stroke="#222" strokeWidth="1.500" fill="none" /></svg></Slot>
      <Slot className="w-[56px]"><div className="relative w-[28px] h-[28px]"><svg width="24" height="28" viewBox="0 0 24 28" fill="none"><path d="M12 26c-7 0-10-3-10-9 0-9 6-14 12-14" stroke="#555" strokeWidth="2.500" /><path d="M7 24c-3-5 0-15 8-16" fill="#999" /></svg><span className="absolute right-0 bottom-0 w-[16px] h-[16px] rounded-full bg-[#e02030] text-white text-[11px] leading-[15px] text-center font-bold">x</span></div></Slot>
      <Slot className="w-[64px]"><div className="text-center text-[17px] leading-[25px] text-[#222] tracking-[-0.2px]">ENG<br />IN</div></Slot>
      <Slot className="w-[43px]"><svg width="26" height="24" viewBox="0 0 26 24" fill="none" className="ml-[8px]"><path d="M1 8c7-7 17-7 24 0M5 12c5-5 11-5 16 0M9 16c2-3 6-3 8 0" stroke="#222" strokeWidth="1.500" /><circle cx="13" cy="21" r="2" fill="#222" /></svg></Slot>
      <Slot className="w-[36px]"><svg width="26" height="26" viewBox="0 0 26 26" fill="none"><path d="M2 9h5l7-6v20l-7-6H2zM18 8c2 3 2 7 0 10M22 5c3 5 3 11 0 16" stroke="#222" strokeWidth="1.300" /></svg></Slot>
      <Slot className="w-[38px]"><svg width="26" height="18" viewBox="0 0 26 18" fill="none"><rect x="1" y="1" width="21" height="16" rx="3" stroke="#222" strokeWidth="1.500" /><rect x="4" y="4" width="8" height="10" fill="#222" /><rect x="23" y="6" width="2.500" height="6" fill="#222" /></svg></Slot>
      <div className="flex-1 pr-[29px] text-right text-[17px] leading-[25px] text-[#222] tracking-[-0.1px] whitespace-nowrap">00:02<br />05-07-2025</div>
    </div>
  );
}

export default function App() {
  return (
    <div className="w-[1920px] h-[1200px] flex flex-col overflow-hidden bg-white font-['Open_Sans','Noto_Sans',sans-serif]">
      <TitleBar />
      <Ribbon />
      <div className="h-[852px] flex shrink-0">
        <LeftNav />
        <div className="w-[1317px] shrink-0 flex flex-col">
          <div className="flex-1 flex min-h-0"><Canvas /><Filters /></div>
          <Tabs />
        </div>
        <Viz />
        <Data />
      </div>
      <Status />
      <Taskbar />
    </div>
  );
}
